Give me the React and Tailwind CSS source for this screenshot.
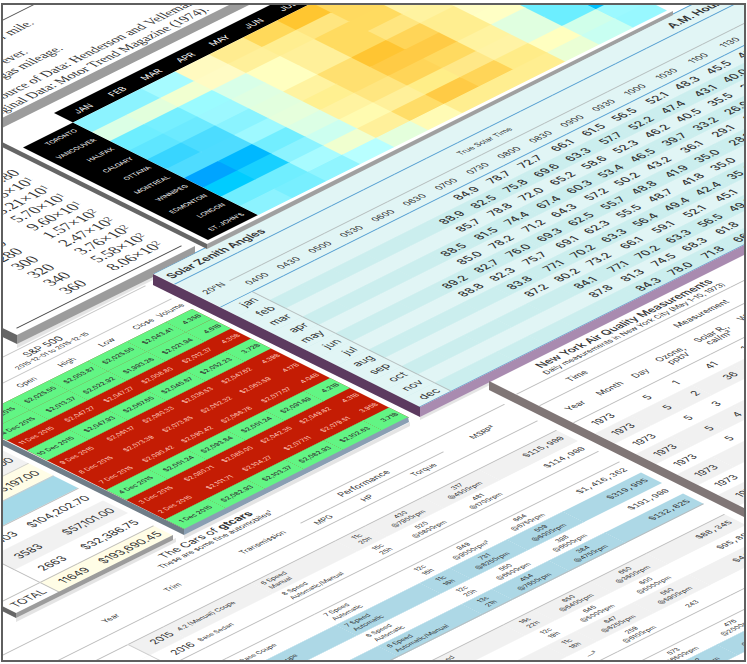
const HEAT = [
  ['#8cf3ff', '#8cf3ff', '#a6fbff', '#fffac0', '#ffec90', '#ffd95a', '#ffc630', '#ffd960', '#ffee90', '#fff3a0', '#d0ffea', '#8cf3ff'],
  ['#dbffe5', '#e2ffdc', '#f1ffd0', '#fffbc4', '#fff09a', '#ffee90', '#ffe680', '#ffda60', '#fff09a', '#fff3a0', '#d0ffea', '#8cf3ff'],
  ['#6eeeff', '#76efff', '#9bfbff', '#d8ffe8', '#ffffc0', '#fff09a', '#ffdb60', '#ffdb60', '#fff3a5', '#fffdc5', '#d0ffea', '#8cf3ff'],
  ['#5fe6ff', '#6ceaff', '#9cf8ff', '#dfffe2', '#ffffc0', '#fff09a', '#ffdb60', '#ffe680', '#fff3a0', '#fffdc5', '#c8fff2', '#8cf3ff'],
  ['#38d5ff', '#4cdcff', '#8af3ff', '#e2ffde', '#fff3a0', '#ffe070', '#ffc532', '#ffd558', '#ffee90', '#fffdc5', '#a8fbff', '#00c0ff'],
  ['#4fdcff', '#4fdcff', '#9ef9ff', '#e6ffdc', '#fff090', '#ffe070', '#ffcb45', '#ffcb45', '#ffee90', '#ffffc5', '#70eeff', '#00c0ff'],
  ['#00a4ff', '#00b8ff', '#72eeff', '#dcffe5', '#fff3a0', '#ffe680', '#ffd558', '#ffda60', '#fff3a0', '#e0ffe0', '#6ceeff', '#00c0ff'],
  ['#00ccff', '#18d0ff', '#8cf3ff', '#ccfff0', '#fffbb0', '#fff09a', '#ffee88', '#ffe888', '#fff3a5', '#e0ffe0', '#6ceeff', '#00c0ff'],
  ['#70eeff', '#70eeff', '#a8fbff', '#f0ffcf', '#fff09a', '#ffdd68', '#ffcb45', '#ffd558', '#ffec88', '#ffffc0', '#d0ffea', '#9cf9ff'],
  ['#8cf3ff', '#78efff', '#90f5ff', '#b8ffff', '#e4ffdc', '#fffbb5', '#ffee90', '#ffee90', '#ffee90', '#eaffd5', '#c8fff2', '#98f8ff'],
];
const CITIES = ['TORONTO', 'VANCOUVER', 'HALIFAX', 'CALGARY', 'OTTAWA', 'MONTREAL', 'WINNIPEG', 'EDMONTON', 'LONDON', "ST. JOHN'S"];
const MONTHS = ['JAN', 'FEB', 'MAR', 'APR', 'MAY', 'JUN', 'JUL', 'AUG', 'SEP', 'OCT', 'NOV', 'DEC'];

function HeatMap() {
  return (
    <div className="absolute left-[-140px] top-[137px] h-[210px] w-[465px] bg-white">
      <div className="absolute left-[54px] top-[3px] h-[19px] w-[409px] bg-black" />
      <div className="absolute left-1 top-[22px] h-[185px] w-[50px] bg-black" />
      <table className="absolute left-1 top-[3px] h-[204px] w-[459px] table-fixed border-collapse leading-none text-white">
        <colgroup>
          <col className="w-[50px]" />
        </colgroup>
        <thead>
          <tr className="h-[19px]">
            <td />
            {MONTHS.map((m) => (
              <th key={m} className="p-0 pl-1 text-[8px] font-normal">{m}</th>
            ))}
          </tr>
        </thead>
        <tbody>
          {HEAT.map((row, r) => (
            <tr key={CITIES[r]}>
              <th className="p-0 pr-1.5 text-right text-[6px] font-normal whitespace-nowrap">{CITIES[r]}</th>
              {row.map((color, c) => (
                <td
                  key={c}
                  className="p-0"
                  style={{
                    backgroundColor: color,
                    boxShadow: `${c < 11 ? 1 : 0}px ${r < 9 ? 1 : 0}px 0 ${color}`,
                  }}
                />
              ))}
            </tr>
          ))}
        </tbody>
      </table>
    </div>
  );
}

const HOURS = ['0400', '0430', '0500', '0530', '0600', '0630', '0700', '0730', '0800', '0830', '0900', '0930', '1000', '1030', '1100', '1130', '1200'];
const ZENITH = [
  ['jan', 6, '84.9 78.7 72.7 66.1 61.5 56.5 52.1 48.3 45.5 43.6 43.0'],
  ['feb', 5, '88.9 82.5 75.8 69.6 63.3 57.7 52.2 47.4 43.1 40.0 37.8 37.2'],
  ['mar', 5, '85.7 78.8 72.0 65.2 58.6 52.3 46.2 40.5 35.5 31.4 28.6 27.7'],
  ['apr', 4, '88.5 81.5 74.4 67.4 60.3 53.4 46.5 39.7 33.2 26.9 21.3 17.2 15.5'],
  ['may', 4, '85.0 78.2 71.2 64.3 57.2 50.2 43.2 36.1 29.1 26.1 15.2 8.8 5.0'],
  ['jun', 3, '89.2 82.7 76.0 69.3 62.5 55.7 48.8 41.9 35.0 28.1 21.1 14.2 7.3 2.0'],
  ['jul', 3, '88.8 82.3 75.7 69.1 62.3 55.5 48.7 41.8 35.0 28.1 21.2 14.3 7.7 3.1'],
  ['aug', 4, '83.8 77.1 70.2 63.3 56.4 49.4 42.4 35.4 28.3 21.3 14.3 7.3 1.9'],
  ['sep', 4, '87.2 80.2 73.2 66.1 59.1 52.1 45.1 38.1 31.3 24.7 18.6 13.7 11.6'],
  ['oct', 5, '84.1 77.1 70.2 63.3 56.5 49.9 43.5 37.5 32.0 27.4 24.3 23.1'],
  ['nov', 5, '87.8 81.3 74.5 68.3 61.8 56.0 50.2 45.3 40.7 37.4 35.1 34.4'],
  ['dec', 6, '84.3 78.0 71.8 66.1 60.5 55.6 50.9 47.2 44.2 42.4 41.8'],
];

function SolarZenith() {
  return (
    <section className="absolute left-[-197px] top-[350px] w-[567px] border-y border-[#4f9bd0] bg-[#e1f5f5] leading-none text-[#333]">
      <header className="flex h-[20px] items-center justify-between pr-2 pl-1 text-[10px] font-semibold">
        <h2>Solar Zenith Angles</h2>
        <p>A.M. Hours</p>
      </header>
      <table className="w-full table-fixed border-collapse">
        <colgroup>
          <col className="w-[31px]" />
        </colgroup>
        <thead className="border-y border-[#4f9bd0]">
          <tr className="h-[24px]">
            <th rowSpan={2} className="p-0 text-[8px] font-normal">20°N</th>
            <th colSpan={17} className="border-b border-[#b5bcbc] p-0 text-[7px] font-normal">
              <span className="block w-[534px] text-center">True Solar Time</span>
            </th>
          </tr>
          <tr className="h-[22px]">
            {HOURS.map((h) => (
              <th key={h} className="p-0 text-[8px] font-normal">{h}</th>
            ))}
          </tr>
        </thead>
      </table>
      <table className="h-[198px] w-full table-fixed border-collapse text-[10px]">
        <colgroup>
          <col className="w-[31px]" />
        </colgroup>
        <tbody>
          {ZENITH.map(([month, start, values], r) => {
            const cells = [...Array(start).fill(''), ...values.split(' ')];
            return (
              <tr
                key={month}
                className={r % 2 ? 'bg-[#cbeeee] [&>td:not(:last-child)]:shadow-[1px_0_0_#cbeeee]' : ''}
              >
                <th className="border-r border-[#b5bcbc] bg-[#e1f5f5] p-0 pr-1 text-right font-normal">{month}</th>
                {HOURS.map((h, c) => (
                  <td key={h} className="p-0 pr-1 text-right font-medium">{cells[c]}</td>
                ))}
              </tr>
            );
          })}
        </tbody>
      </table>
    </section>
  );
}

const STOCKS = [
  ['15', '2,025.55', '2,053.87', '2,025.55', '2,043.41', '4.35B', 1],
  ['14', '2,013.37', '2,022.92', '1,993.26', '2,021.94', '4.61B', 1],
  ['11', '2,047.27', '2,047.27', '2,008.80', '2,012.37', '4.30B', 0],
  ['10', '2,047.93', '2,067.65', '2,045.67', '2,052.23', '3.72B', 1],
  ['9', '2,061.17', '2,080.33', '2,036.53', '2,047.62', '4.39B', 0],
  ['8', '2,073.39', '2,073.85', '2,052.32', '2,063.59', '4.17B', 0],
  ['7', '2,090.42', '2,090.42', '2,066.78', '2,077.07', '4.04B', 0],
  ['4', '2,051.24', '2,093.84', '2,051.24', '2,091.69', '4.21B', 1],
  ['3', '2,080.71', '2,085.00', '2,042.35', '2,049.62', '4.31B', 0],
  ['2', '2,101.71', '2,104.27', '2,077.11', '2,079.51', '3.95B', 0],
  ['1', '2,082.93', '2,103.37', '2,082.93', '2,102.63', '3.71B', 1],
];

function StockColumns() {
  return (
    <colgroup>
      <col className="w-[42px]" />
      <col className="w-[39px]" />
      <col className="w-[39px]" />
      <col className="w-[39px]" />
      <col className="w-[39px]" />
    </colgroup>
  );
}

function Stocks() {
  return (
    <section className="absolute left-[-437px] top-[345px] w-[224px] bg-white pt-[13px] leading-none text-[#333]">
      <header className="flex h-[27px] flex-col items-center justify-center gap-0.5 border-y border-[#c4c4c4]">
        <h2 className="text-[9px]">S&amp;P 500</h2>
        <p className="text-[6px]">2015-12-01 to 2015-12-15</p>
      </header>
      <table className="w-full table-fixed border-collapse text-right text-[7px]">
        <StockColumns />
        <thead>
          <tr className="h-[20px]">
            <td />
            {['Open', 'High', 'Low', 'Close', 'Volume'].map((h) => (
              <th key={h} className="p-0 pr-1 text-right font-normal last:pr-0">{h}</th>
            ))}
          </tr>
        </thead>
      </table>
      <table className="h-[217px] w-full table-fixed border-collapse bg-[#c41c04] text-right text-[6px] whitespace-nowrap">
        <StockColumns />
        <tbody>
          {STOCKS.map(([day, open, high, low, close, volume, up]) => (
            <tr
              key={day}
              className={up ? 'bg-[#62f584] font-medium [&>td:not(:last-child)]:shadow-[1px_0_0_#62f584]' : 'text-[#ffc9bd]'}
            >
              <td className="p-0 pr-1.5">{day} Dec 2015</td>
              {[open, high, low, close].map((v, i) => (
                <td key={i} className="p-0 pr-1">${v}</td>
              ))}
              <td className="p-0 pr-0.5">{volume}</td>
            </tr>
          ))}
        </tbody>
      </table>
    </section>
  );
}

const POWERS = [
  ['180', '8.80', ''], ['200', '1.85', '1'], ['220', '3.21', '1'], ['240', '5.70', '1'], ['260', '9.60', '1'],
  ['280', '1.57', '2'], ['300', '2.47', '2'], ['320', '3.76', '2'], ['340', '5.58', '2'], ['360', '8.06', '2'],
];

function Powers() {
  return (
    <div className="absolute left-[-326px] top-[160px] h-[184px] w-[177px] bg-white px-1.5 pt-3 font-['Liberation_Serif',serif] text-[14px] leading-none text-[#333]">
      <div className="border-b border-[#444] pb-1">
        <table className="w-full border-collapse text-right">
          <tbody>
            {POWERS.map(([x, value, exp]) => (
              <tr key={x} className="h-[16px]">
                <td className="w-[80px] p-0">{x}</td>
                <td className="p-0 pr-2">
                  {value}
                  {exp && <>×10<sup className="top-0 align-top text-[9px] leading-none">{exp}</sup></>}
                </td>
              </tr>
            ))}
          </tbody>
        </table>
      </div>
    </div>
  );
}

function SourceNotes() {
  return (
    <div className="absolute left-[-140px] top-[-120px] h-[240px] w-[420px] bg-white font-['Liberation_Serif',serif] text-[12px] leading-[14px] whitespace-nowrap text-[#333]">
      <div className="h-[142px] border-b border-[#555]" />
      <p className="w-[134px] pt-2 text-right">per mile.</p>
      <p className="w-[102px] pt-3 text-right">ever.</p>
      <p className="w-[123px] text-right">gas mileage.</p>
      <p className="pt-1.5 pl-[36px]">Source of Data: Henderson and Velleman (1981).</p>
      <p className="w-[235px] text-right">Original Data: Motor Trend Magazine (1974).</p>
    </div>
  );
}

const TOTALS = [
  ['', '$8,280.00', 'bg-[#f1f1f1] [&>td:not(:last-child)]:shadow-[1px_0_0_#f1f1f1]'],
  ['', '$35,197.00', 'border-y border-[#ccc] bg-[#fffde6] [&>td:not(:last-child)]:shadow-[1px_0_0_#fffde6]'],
  ['', '', 'border-b border-[#bbb] bg-[#a4d9e8] [&>td:not(:last-child)]:shadow-[1px_0_0_#a4d9e8]'],
  ['5403', '$104,202.70', ''],
  ['3583', '$57,101.00', 'bg-[#f1f1f1] [&>td:not(:last-child)]:shadow-[1px_0_0_#f1f1f1]'],
  ['2663', '$32,386.75', ''],
];

function Totals() {
  return (
    <div className="absolute left-[-605px] top-[452px] h-[170px] w-[156px] bg-white text-[10px] leading-none text-[#333]">
      <table className="w-full table-fixed border-collapse text-right">
        <colgroup>
          <col className="w-[42px]" />
          <col className="w-[38px]" />
        </colgroup>
        <tbody>
          {TOTALS.map(([count, money, tone], i) => (
            <tr key={i} className={`h-[25px] ${tone}`}>
              <td className="border-r border-[#bbb] bg-white p-0" />
              <td className="p-0">{count}</td>
              <td className="p-0 pr-1">{money}</td>
            </tr>
          ))}
          <tr className="h-[20px] border-t border-[#bbb] bg-[#fffde6] [&>td:not(:last-child)]:shadow-[1px_0_0_#fffde6]">
            <th className="border-r border-[#bbb] bg-white p-0 text-center font-normal">TOTAL</th>
            <td className="p-0">11649</td>
            <td className="p-0 pr-1">$193,690.45</td>
          </tr>
        </tbody>
      </table>
    </div>
  );
}

const BLUE = 'bg-[#add8e6] [&>td:not(:last-child)]:shadow-[1px_0_0_#add8e6]';
const GREY = 'bg-[#f1f1f1] [&>td:not(:last-child)]:shadow-[1px_0_0_#f1f1f1]';
const CARS = [
  [GREY, '2015', '4.2 (Manual) Coupe', '6 Speed|Manual', '11c|20h', '430|@7900rpm', '317|@4500rpm', '$115,900'],
  ['', '2016', 'Base Sedan', '8 Speed|Automatic/Manual', '15c|25h', '520|@5800rpm', '481|@1700rpm', '$114,900'],
  null,
  ['', '2015', 'Base Coupe', '7 Speed|Automatic', '12c|16h', '949|@9000rpm²', '664|@6750rpm', '$1,416,362'],
  [BLUE, '2016', 'Base Coupe', '7 Speed|Automatic', '11c|16h', '731|@8250rpm', '509|@6000rpm', '$319,995'],
  ['', '2016', 'Base Coupe', '6 Speed|Automatic', '12c|20h', '550|@6500rpm', '398|@6500rpm', '$191,900'],
  [BLUE, '2014', 'Base Coupe', '6 Speed|Automatic/Manual', '13c|21h', '454|@7600rpm', '384|@4750rpm', '$132,825'],
  null,
  [GREY, '2016', 'Z06 Coupe', '7 Speed|Manual', '16c|22h', '650|@6400rpm', '650|@3600rpm', '$88,345'],
  ['', '2016', 'SRT Coupe', '6 Speed|Manual', '12c|19h', '645|@5000rpm', '600|@5000rpm', '$95,895'],
  [GREY, '2017', 'GT Coupe', '6 Speed|Manual', '11c|18h', '647|@6250rpm', '550|@5900rpm', '$447,000'],
  ['', '2016', 'Coupe', '6 Speed', '—³', '259|@6100rpm', '243', '$53,000'],
  null,
  ['', '2016', 'Base', '7 Speed|Automatic', '11c|18h', '573|@6500rpm', '476|@2000rpm', '$140,000'],
  [BLUE, '2016', 'Base', '7 Speed|Automatic', '11c|18h', '562|@6500rpm', '395|@2000rpm', '$150,000'],
];

function Stacked({ text }) {
  return text.split('|').map((line) => <span key={line} className="block">{line}</span>);
}

function Cars() {
  return (
    <section className="absolute left-[-712px] top-[627px] w-[560px] bg-white leading-none text-[#333]">
      <header className="flex h-[29px] flex-col items-center justify-center gap-0.5">
        <h2 className="text-[10px]">The Cars of <b>gtcars</b></h2>
        <p className="text-[7px]">These are some fine automobiles¹</p>
      </header>
      <table className="w-full table-fixed border-collapse text-[6px]">
        <colgroup>
          <col className="w-[131px]" />
          <col className="w-[36px]" />
          <col className="w-[88px]" />
          <col className="w-[84px]" />
          <col className="w-[30px]" />
          <col className="w-[57px]" />
          <col className="w-[56px]" />
          <col className="w-[78px]" />
        </colgroup>
        <thead className="border-y border-[#bbb] text-[7px]">
          <tr className="h-[17px]">
            <td rowSpan={2} />
            <th rowSpan={2} className="p-0 font-normal">Year</th>
            <th rowSpan={2} className="p-0 font-normal">Trim</th>
            <th rowSpan={2} className="p-0 pl-2 font-normal">Transmission</th>
            <th colSpan={3} className="border-b border-[#bbb] p-0 text-[8px] font-normal">Performance</th>
            <th rowSpan={2} className="p-0 font-normal">MSRP²</th>
          </tr>
          <tr className="h-[16px]">
            <th className="p-0 font-normal">MPG</th>
            <th className="p-0 font-normal">HP</th>
            <th className="p-0 font-normal">Torque</th>
          </tr>
          <tr className="h-[19px] border-t border-[#bbb]">
            <td colSpan={8} />
          </tr>
        </thead>
        <tbody className="leading-[8px]">
          {CARS.map((car, i) =>
            car ? (
              <tr key={i} className={`h-[21px] ${car[0]}`}>
                <td className="border-r border-[#ccc] bg-white p-0" />
                <td className="p-0 pr-0.5 text-right text-[9px]">{car[1]}</td>
                <td className="p-0 pl-1">{car[2]}</td>
                <td className="p-0 pl-1"><Stacked text={car[3]} /></td>
                <td className="p-0 text-center"><Stacked text={car[4]} /></td>
                <td className="p-0 text-center"><Stacked text={car[5]} /></td>
                <td className="p-0 text-center"><Stacked text={car[6]} /></td>
                <td className="p-0 pr-1 text-right font-['Liberation_Mono',monospace] text-[8px]">{car[7]}</td>
              </tr>
            ) : (
              <tr key={i} className="h-[21px] border-y border-[#bbb]">
                <td colSpan={8} />
              </tr>
            ),
          )}
        </tbody>
      </table>
    </section>
  );
}

const AIR = [
  ['1', '41', '190', '7.4', '67'],
  ['2', '36', '118', '8.0', '72'],
  ['3', '12', '149', '12.6', '74'],
  ['4', '18', '313', '11.5', '62'],
  ['5', '—', '—', '14.3', '56'],
  ['6', '28', '—', '14.9', '66'],
  ['7', '23', '299', '8.6', '65'],
  ['8', '19', '99', '13.8', '59'],
  ['9', '8', '19', '20.1', '61'],
  ['10', '—', '194', '8.6', '69'],
];

function AirColumns() {
  return (
    <colgroup>
      <col className="w-[36px]" />
      <col className="w-[33px]" />
      <col className="w-[28px]" />
      <col className="w-[40px]" />
      <col className="w-[42px]" />
      <col className="w-[35px]" />
    </colgroup>
  );
}

function AirQuality() {
  return (
    <section className="absolute left-[-136px] top-[626px] w-[249px] bg-white leading-none whitespace-nowrap text-[#333]">
      <header className="flex h-[26px] flex-col items-center justify-center gap-0.5">
        <h2 className="text-[10px] font-medium">New York Air Quality Measurements</h2>
        <p className="text-[7px]">Daily measurements in New York City (May 1-10, 1973)</p>
      </header>
      <table className="w-full table-fixed border-collapse text-[8px]">
        <AirColumns />
        <thead className="border-y border-[#bbb]">
          <tr className="h-[23px] border-b border-[#bbb]">
            <th colSpan={3} className="p-0 font-normal">Time</th>
            <th colSpan={4} className="p-0 font-normal">Measurement</th>
          </tr>
          <tr className="h-[34px]">
            <th className="p-0 font-normal">Year</th>
            <th className="p-0 font-normal">Month</th>
            <th className="p-0 font-normal">Day</th>
            <th className="p-0 font-normal">Ozone,<br />ppbV</th>
            <th className="p-0 font-normal">Solar R.,<br />cal/m²</th>
            <th className="p-0 font-normal">Wind,<br />mph</th>
            <th className="p-0 font-normal">Temp,<br />°F</th>
          </tr>
        </thead>
      </table>
      <table className="h-[206px] w-full table-fixed border-collapse text-right text-[9px]">
        <AirColumns />
        <tbody>
          {AIR.map(([day, ...rest], r) => (
            <tr key={day} className={r % 2 ? GREY : ''}>
              <td className="p-0 pr-2">1973</td>
              <td className="p-0 pr-1">5</td>
              <td className="p-0 pr-1">{day}</td>
              {rest.map((v, i) => (
                <td key={i} className="p-0 pr-1.5">{v}</td>
              ))}
            </tr>
          ))}
        </tbody>
      </table>
    </section>
  );
}

function SlabEdges() {
  return (
    <svg className="absolute left-0 top-0 h-[664px] w-[747px] overflow-visible" aria-hidden="true">
      <g fill="#000" opacity="0.1">
        <polygon points="17,344 17,348 153,280 153,276" />
        <polygon points="184,535 184,539 410,426 410,422" />
        <polygon points="16,618 16,622 176,542 176,538" />
        <polygon points="420,417 420,420 490,385 490,382" />
      </g>
      <polygon points="-2,120 235,2 255,2 -2,130" fill="#9c9c9c" />
      <polygon points="-2,140 207,244 207,249 -2,145" fill="#666" />
      <polygon points="207,244 673,11 673,15 207,249" fill="#a0a0a0" />
      <polygon points="-2,326 17,335 17,344 -2,335" fill="#666" />
      <polygon points="17,335 195,246 195,253 153,274 153,277 17,344" fill="#9c9c9c" />
      <polygon points="153,274 420,407 420,417 153,285" fill="#5c3a5f" />
      <polygon points="420,407 750,242 750,252 420,417" fill="#a98bb0" />
      <polygon points="-2,437 184,529 184,535 -2,443" fill="#6f7d88" />
      <polygon points="184,529 408,417 409,422 184,535" fill="#8a9fb3" />
      <polygon points="-2,604 16,613 16,618 -2,609" fill="#666" />
      <polygon points="16,613 173,535 173,540 16,618" fill="#9c9c9c" />
      <polygon points="489,381 750,511 750,520 489,390" fill="#807676" />
    </svg>
  );
}

export default function App() {
  return (
    <main className="h-screen bg-white px-px pt-[3px] pb-0.5 font-['Inter',sans-serif]">
      <figure className="relative h-full overflow-hidden border-2 border-[#5f5f5f] bg-white">
        <div className="absolute -left-[3px] -top-[5px]">
          <div className="absolute left-0 top-0 origin-top-left [transform:matrix(1,-0.5,1,0.5,0,0)]">
            <Cars />
            <Totals />
            <Stocks />
            <AirQuality />
            <Powers />
            <SourceNotes />
            <HeatMap />
            <SolarZenith />
          </div>
          <SlabEdges />
        </div>
      </figure>
    </main>
  );
}
